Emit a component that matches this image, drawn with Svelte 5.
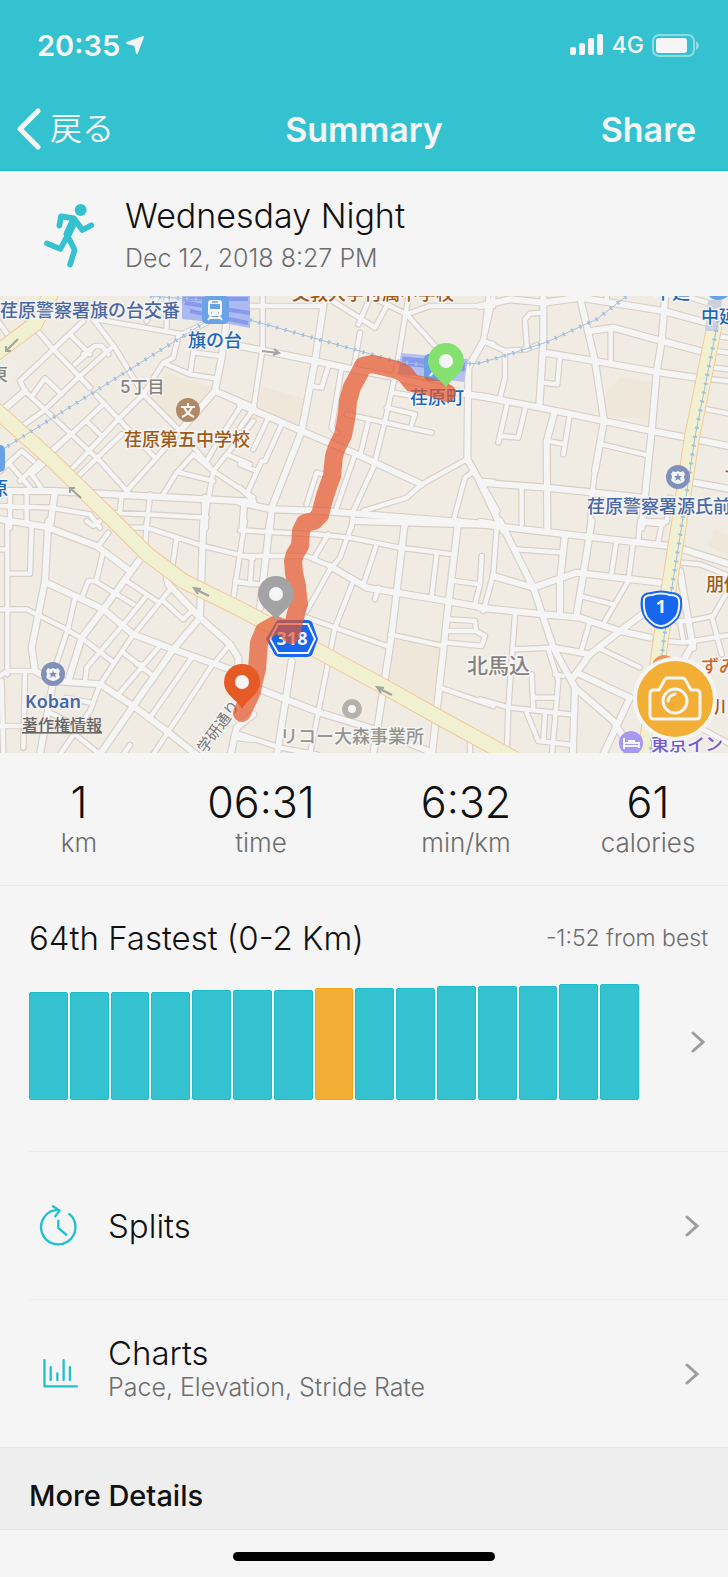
<script>
  const stats = [
    { value: '1', unit: 'km' },
    { value: '06:31', unit: 'time' },
    { value: '6:32', unit: 'min/km' },
    { value: '61', unit: 'calories' }
  ];

  const runs = [108, 108, 108, 108, 110, 110, 110, 112, 112, 112, 114, 114, 114, 116, 116];
  const currentRun = 7;

  // Street network, in map sectors drawn at three units to the pixel.
  const sectors = [
    {
      x: 0, y: 290,
      narrow: 'M-10 85L30 140M70 70L160 175L270 290M288 312L465 500M250 90L160 175L60 270L75 300L0 360M75 300L300 510L385 605M210 130L270 190M250 190L285 165L305 165L325 190M225 220L275 175M240 255L340 165M240 255L130 360L60 410M100 310L135 262L185 310M280 85L345 170L400 260L430 310L550 430L640 540L760 620M290 85L550 130M620 95L535 135L520 200L490 215L430 310L355 385L210 540M490 215L570 250L645 262M585 150L570 250M585 185L660 195M310 340L160 480M260 390L300 430M365 430L230 560M540 420L470 500L380 600M620 510L660 440L720 350M580 490L640 540L760 390M540 545L640 570M580 490L530 545L490 610M640 540L610 710M680 490L750 520M0 540L65 480L100 510M30 520L90 590M130 520L95 550L130 600M30 600L30 710M80 600L80 690M0 645L150 650L270 670L300 710M365 610L360 665M330 665L440 670L620 680M450 610L440 710M735 630L730 710M690 165L760 172M700 90L700 42L760 45M440 90L470 20M500 110L500 20M210 430L130 500L60 570',
      wide: 'M680 90L665 200L645 300L540 420M645 300L760 350M0 600L160 600L370 612L760 632M165 600L150 710M615 620L615 710M75 300L0 365'
    },
    {
      x: 240, y: 290,
      narrow: 'M0 45L250 45L260 20M270 25L405 110L440 45M355 100L390 20M400 20L500 70M500 70L570 45L760 45M500 70L590 170M505 20L470 230L435 390L400 530L340 660M68 0L68 170L40 355L0 410M360 125L340 235M265 225L245 290L215 285M305 230L275 410L290 425M320 370L575 425M440 350L525 370L515 400M460 305L520 315M85 380L40 475M125 400L75 510L65 510L20 610M0 520L50 540M345 490L290 650M385 390L360 495M760 20L730 150L760 160M0 590L40 630M200 640L230 545L250 550M640 690L675 560L695 545M720 570L760 572M340 660L335 710M495 680L495 710M10 640L5 710M370 660L500 620L545 580L680 505',
      wide: 'M0 165L225 210L340 235L470 260L680 310L760 322M250 45L225 210L185 420L95 650M0 340L185 420L350 490L545 580M730 150L685 230L682 505L770 660M0 635L95 655L250 660L750 700M95 650L90 710'
    },
    {
      x: 480, y: 290,
      narrow: 'M25 20L10 150L75 180L140 175L190 155M75 180L75 260L60 320M190 65L150 68L135 85L140 165M392 115L392 210M240 195L232 280L190 275M80 345L55 455M135 355L115 440L65 435M268 380L250 490M205 450L255 460M365 460L500 492M125 585L125 700M0 690L60 700M710 135L760 142M705 180L760 187M700 230L760 237M695 265L760 272M680 355L760 370M380 0L380 30M600 10L690 38M490 690L560 692L570 620M335 610L330 710M345 540L335 620',
      wide: 'M0 45L90 25L190 35L300 20L550 60L680 95M190 20L190 155L178 345M300 20L345 210L372 390L345 540M330 120L400 110L545 150L660 180M195 185L345 210L530 243L650 260M555 20L545 150L530 243L515 420L485 710M0 315L180 350L372 390L515 420L620 440L760 468M222 370L200 450L202 710M0 575L200 590L490 620M0 575L70 720M645 575L760 596'
    },
    {
      x: 0, y: 520,
      narrow: 'M22 0L22 460M95 10L90 158L22 158M0 85L22 85M0 265L80 265L190 320L250 355L335 420M325 35L295 75L310 90L290 175M245 230L265 180L285 180L400 250M380 180L470 240M225 230L205 320L165 440M435 230L370 310L260 440L255 480M515 200L410 330M400 340L300 490M490 240L550 295L580 265M475 380L360 515M370 395L460 465M575 410L450 590M635 435L460 700M690 370L640 430M440 0L435 100M380 20L440 20L610 75L760 112M530 50L515 150M735 0L700 230M705 180L760 190M0 465L20 450L105 450M5 480L10 700M75 460L70 680M0 615L70 615M300 490L270 570L180 700M200 530L270 545M200 620L300 700M150 575L200 600L205 630M370 700L390 672M260 0L280 15L300 0M700 650L760 657M410 430L430 430',
      wide: 'M0 -5L140 18L290 75L390 150M145 0L135 180L95 380L105 450L160 480L300 490L400 555L500 630L600 710M140 185L310 265L400 340L520 385L710 452M420 115L310 265L245 350L205 480M500 170L505 190L600 290L690 370L715 410L715 450M600 290L520 385L400 555L300 700M610 0L600 290M160 480L120 700M760 580L710 620L690 710'
    },
    {
      x: 240, y: 520,
      narrow: 'M0 28L230 40L330 50L480 80L640 100M0 105L200 105L270 135M265 40L220 115M340 0L300 110L270 145L200 270M35 120L30 190M0 185L60 190M340 180L285 320L210 700M410 70L370 190M415 200L405 235M590 100L575 225M645 180L720 190M725 105L720 190L705 250M450 340L610 375M200 290L440 375M630 295L705 300L708 330L735 345L725 375L620 365M630 330L700 330M0 640L120 680L230 700M600 500L760 555M690 660L690 710',
      wide: 'M350 0L760 12M90 0L60 260M270 135L380 200L620 240L760 265M495 0L455 340L400 700M655 0L625 250L575 710M60 505L240 575L420 630L570 692M155 420L110 710'
    },
    {
      x: 480, y: 520,
      narrow: 'M50 20L40 160L10 270M110 85L250 95M300 225L400 250M410 55L395 155M460 60L445 180L375 300M480 0L475 60M545 10L535 60M490 5L550 10M330 300L305 385M100 385L220 380M105 280L85 560L80 710M365 385L480 440M155 460L160 560M160 530L230 530M0 535L90 560L270 580M205 385L235 480L215 710M140 575L175 660L280 672M195 580L190 660M225 460L250 465M605 125L660 130L760 170M560 360L610 365L760 340M625 300L700 285L760 180M695 285L725 400M590 300L625 300M600 300L610 360M660 620L760 675',
      wide: 'M0 10L260 40L480 65L570 75M60 0L160 200L220 380L285 500L278 710M40 165L160 200L290 155L540 185M255 40L240 180L240 280M0 260L190 280L300 290L420 330L510 350M335 0L310 160L290 280M500 270L420 330L330 400L275 475M220 380L330 400M300 460L450 530M285 500L400 600L450 680M450 530L370 700M610 85L760 133M600 150L625 300L640 380M640 365L610 420'
    }
  ];

  const mainRoads =
    'M55 285L35 323L-5 353M-5 408L53 460L114 520L147 553L183 580L240 608L383 685L440 717L515 758M715 322L692 436L679 523L661 637L645 756';
  const railways = 'M0 450L215 315M150 295L215 300M250 319L395 360L430 365L480 362L507 354L547 341L597 318L628 294M718 320L695 436L682 523L664 637L650 756';
  const route =
    'M447 392L430 386L412 382L405 373L397 369L385 366L372 363L363 365L358 375L352 386L348 400L347 412L345 424L343 434L337 446L334 455L333 465L332 475L328 486L325 495L322 506L320 514L314 520L305 522L301 530L300 545L295 553L293 560L294 572L297 585L298 596L299 603L296 612L291 634L287 628L275 624L264 630L259 642L258 655L257 668L254 680L252 690L249 697L245 705L242 712';
</script>

{#snippet chevron()}
  <svg class="chevron" viewBox="0 0 14 22" aria-hidden="true"><path d="M2 2L12 11L2 20" /></svg>
{/snippet}

{#snippet pin(x, y, color)}
  <g transform="translate({x} {y})">
    <path d="M0 27C-4 18-18 13-18 0A18 18 0 0 1 18 0C18 13 4 18 0 27Z" fill={color} />
    <circle r="7" fill="#f5f5f5" />
  </g>
{/snippet}

{#snippet police(x, y)}
  <g transform="translate({x} {y})">
    <circle r="12" fill="#7f90ba" />
    <path d="M-5-6Q-3-4 0-6Q3-4 5-6L7-3Q5 0 7 3Q5 6 0 7Q-5 6-7 3Q-5 0-7-3Z" fill="#f5f5f5" />
    <path d="M0-4L1-1L4-1L2 1L3 4L0 2L-3 4L-2 1L-4-1L-1-1Z" fill="#7f90ba" />
  </g>
{/snippet}

<main>
  <header>
    <div class="status">
      <span class="clock">20:35</span>
      <svg class="arrow" viewBox="0 0 20 20" aria-hidden="true"><path d="M18 2L12 18L10 10L2 8Z" /></svg>
      <svg class="signal" viewBox="0 0 34 22" aria-hidden="true">
        <rect x="0" y="13" width="6" height="8" rx="2" /><rect x="9" y="9" width="6" height="12" rx="2" />
        <rect x="18" y="4" width="6" height="17" rx="2" /><rect x="27" y="0" width="6" height="21" rx="2" />
      </svg>
      <span class="network">4G</span>
      <svg class="battery" viewBox="0 0 48 23" aria-hidden="true">
        <rect x="1" y="1" width="41" height="21" rx="6" fill="none" stroke="#8edde4" stroke-width="2" />
        <rect x="4" y="4" width="31" height="15" rx="3" /><path d="M44 7Q50 11 44 16Z" fill="#8edde4" />
      </svg>
    </div>
    <nav>
      <button class="back">
        <svg viewBox="0 0 26 42" aria-hidden="true"><path d="M22 3L4 21L22 39" /></svg>
        <span>戻る</span>
      </button>
      <h1>Summary</h1>
      <button class="share">Share</button>
    </nav>
  </header>

  <section class="activity">
    <svg class="runner" viewBox="126 604 162 204" aria-hidden="true">
      <circle cx="242" cy="628" r="18" />
      <path d="M178 675L183 647L222 653L247 688L274 674M203 704L181 745L141 728M204 708L224 748L210 792" />
      <path class="torso" d="M221 662L203 701" />
    </svg>
    <div>
      <h2>Wednesday Night</h2>
      <p>Dec 12, 2018 8:27 PM</p>
    </div>
  </section>

  <section class="map" aria-label="Route map">
    <svg viewBox="0 295 728 457" preserveAspectRatio="xMidYMid slice">
      <path d="M165 372L215 387L203 405L180 430L147 393ZM262 385L304 398L298 425L252 415ZM604 395L620 376L652 381L648 418L606 415ZM390 636L440 645L432 710L382 684ZM714 528L728 534V553L708 545Z" fill="#efe7da" />
      {#each sectors as s}
        <g class="casing" transform="translate({s.x} {s.y}) scale(.333333)">
          <path d={s.narrow} stroke-width="20" /><path d={s.wide} stroke-width="25" />
        </g>
      {/each}
      {#each sectors as s}
        <g class="street" transform="translate({s.x} {s.y}) scale(.333333)">
          <path d={s.narrow} stroke-width="13" /><path d={s.wide} stroke-width="18" />
        </g>
      {/each}
      <path d={mainRoads} fill="none" stroke="#f3c898" stroke-width="16" />
      <path d={mainRoads} fill="none" stroke="#f1f1d1" stroke-width="14" />

      <path d="M182 295H250V327L230 323L182 318Z" fill="#adb9f1" />
      <path d="M185 302L250 312M190 310L248 322M183 298H248" stroke="#8699ed" stroke-width="4" />
      <path d="M401 352L468 358L464 381L398 373Z" fill="#b5c0ef" />
      <path d="M402 360L465 366" stroke="#8599ed" stroke-width="9" />
      <path d="M708 299H722L718 330H705Z" fill="#cbd1dc" />
      <path d={railways} class="rail" /><path d={railways} class="ties" />

      <g class="oneway">
        <path d="M18 338L6 350M6 345V350H11" /><path d="M81 497L70 487M70 492V487H75" />
        <path d="M262 350L278 352M274 348L279 352L273 354" /><path d="M209 595L195 588M198 593L194 587L201 588" />
        <path d="M392 694L378 687M381 692L377 686L384 687" />
      </g>

      <g transform="translate(215 309)">
        <rect x="-13" y="-14" width="27" height="28" rx="5" fill="#69a3e6" />
        <rect x="-7" y="-10" width="14" height="16" rx="3" fill="#f5f5f5" />
        <path d="M-5-6H5V-1H-5Z" fill="#69a3e6" /><path d="M-3-8H3M-4 3H-3M3 3H4" stroke="#69a3e6" stroke-width="1.500" />
        <path d="M-4 6L-7 10M4 6L7 10M-5 8H5" stroke="#f5f5f5" stroke-width="2" />
      </g>
      <rect x="424" y="353" width="27" height="27" rx="5" fill="#69a3e6" />
      <path d="M430 375L439 364" stroke="#f5f5f5" stroke-width="2" />
      <rect x="-20" y="444" width="25" height="27" rx="5" fill="#69a3e6" />
      <path d="M709 286H728V295Q724 299 718 299Q712 299 709 295Z" fill="#69a3e6" />

      <g transform="translate(188 409)"><circle r="12" fill="#b08a66" /><path d="M0-7V-3M-7-3H7M-4-3Q-1 4 6 7M4-3Q1 4-6 7" fill="none" stroke="#f5f5f5" stroke-width="2" /></g>
      {@render police(678, 476)}
      {@render police(53, 673)}
      <circle cx="352" cy="708" r="7" fill="#f5f5f5" stroke="#b5b2ab" stroke-width="6" />
      <circle cx="664" cy="666" r="12" fill="#ee955c" />
      <g transform="translate(631 742)"><circle r="12" fill="#a799f2" /><path d="M-7-5V6M-7 3H8M8 5V0H-7M-3-2H4" stroke="#f5f5f5" stroke-width="2" fill="none" /></g>

      <g class="labels">
        <text x="0" y="316" class="navy">荏原警察署旗の台交番</text>
        <text x="188" y="346" class="blue">旗の台</text>
        <text x="292" y="299" class="brown">文教大学付属中学校</text>
        <text x="-10" y="380" class="gray">東</text>
        <text x="120" y="392" class="gray small">5丁目</text>
        <text x="124" y="445" class="brown">荏原第五中学校</text>
        <text x="-10" y="494" class="blue">原</text>
        <text x="410" y="403" class="blue">荏原町</text>
        <text x="654" y="298" class="blue">中延</text>
        <text x="701" y="322" class="blue">中延</text>
        <text x="587" y="512" class="navy">荏原警察署源氏前</text>
        <text x="724" y="482" class="brown">す</text>
        <text x="706" y="590" class="brown">朋優</text>
        <text x="701" y="672" class="orange">ずみ</text>
        <text x="714" y="712" class="brown">川</text>
        <text x="467" y="672" class="gray place">北馬込</text>
        <text x="280" y="742" class="stone">リコー大森事業所</text>
        <text x="651" y="750" class="violet">東京イン</text>
        <text x="25" y="707" class="navy koban">Koban</text>
        <text transform="translate(205 753) rotate(-54)" class="road">学研通り</text>
      </g>
      <a href="#legal"><text x="22" y="730" class="legal">著作権情報</text></a>

      <path d="M266 638L276 621Q277 619 280 619H307Q310 619 312 621L318 638L312 654Q310 656 307 656H280Q277 656 275 654Z" fill="#1766ee" />
      <path d="M270 638L278 623H308L315 638L308 652H278Z" class="shield" />
      <text x="292" y="644" class="number">318</text>
      <path d="M641 597Q643 591 651 591Q661 588 671 591Q680 591 682 598Q683 610 678 618Q669 628 661 628Q653 628 645 618Q639 609 641 597Z" fill="#1766ee" />
      <path d="M644 598Q645 594 652 594Q661 591 670 594Q678 594 679 599Q680 609 676 616Q668 625 661 625Q654 625 647 616Q643 609 644 598Z" class="shield" />
      <text x="661" y="612" class="number">1</text>

      <path d={route} class="route" />
      {@render pin(276, 593, '#a3a3a3')}
      {@render pin(446, 360, '#84e170')}
      {@render pin(242, 681, '#e65a25')}
    </svg>
    <button class="camera" aria-label="Add photo">
      <svg viewBox="0 0 54 46" aria-hidden="true">
        <path d="M6 14H11L16 5Q17 2 20 2H34Q37 2 38 5L43 14H48Q52 14 52 18V39Q52 43 48 43H6Q2 43 2 39V18Q2 14 6 14Z" />
        <circle cx="27" cy="25" r="12" /><path d="M20 25Q21 19 27 18" />
      </svg>
    </button>
  </section>

  <dl class="stats">
    {#each stats as stat}
      <div><dd>{stat.value}</dd><dt>{stat.unit}</dt></div>
    {/each}
  </dl>

  <section class="ranking">
    <div class="heading"><h3>64th Fastest (0-2 Km)</h3><p>-1:52 from best</p></div>
    <a class="history" href="#history" aria-label="Run history">
      <div class="bars">
        {#each runs as height, i}
          <span class:current={i === currentRun} style="height: {height}px"></span>
        {/each}
      </div>
      {@render chevron()}
    </a>
  </section>

  <a class="row" href="#splits">
    <svg class="icon" viewBox="117 192 120 130" aria-hidden="true"><path d="M175 210A52 52 0 1 0 208 222M159 199L179 212L166 229M175 242V265L199 285" stroke-width="7" /></svg>
    <div><h3>Splits</h3></div>
    {@render chevron()}
  </a>
  <a class="row detailed" href="#charts">
    <svg class="icon" viewBox="117 633 120 130" aria-hidden="true"><path d="M133 658V737H231M152 679V718M172 698V718M191 658V718M210 679V718" stroke-width="7" /></svg>
    <div><h3>Charts</h3><p>Pace, Elevation, Stride Rate</p></div>
    {@render chevron()}
  </a>

  <h2 class="more">More Details</h2>
  <footer><span></span></footer>
</main>

<style>
  :global(body) { margin: 0; background: #f5f5f5; }
  main { font-family: Inter, "Noto Sans CJK JP", sans-serif; color: #111; font-weight: 300; background: #f5f5f5; }
  h1, h2, h3, p, dl, dd, dt { margin: 0; font-weight: inherit; }
  button { border: 0; padding: 0; background: none; font: inherit; color: inherit; cursor: pointer; }
  a { color: inherit; text-decoration: none; }
  svg { display: block; flex: none; }

  header { background: #35c2d0; color: #f5f5f5; border-bottom: 1px solid #12bccd; }
  .status { display: flex; align-items: center; height: 90px; padding: 0 28px 0 37px; fill: #f5f5f5; }
  .clock { font-size: 29px; font-weight: 600; }
  .arrow { width: 20px; height: 20px; margin-left: 5px; stroke: #f5f5f5; stroke-width: 2px; stroke-linejoin: round; }
  .signal { width: 34px; height: 22px; margin-left: auto; }
  .network { font-size: 23px; font-weight: 500; margin: 0 8px; }
  .battery { width: 48px; height: 23px; }
  nav { display: grid; grid-template-columns: 1fr auto 1fr; align-items: center; height: 78px; padding: 0 32px 2px; }
  .back { display: flex; align-items: center; gap: 8px; justify-self: start; margin-left: -16px; font-size: 32px; line-height: 42px; }
  .back svg { width: 26px; height: 42px; fill: none; stroke: #f5f5f5; stroke-width: 5px; stroke-linecap: round; stroke-linejoin: round; }
  .back span { font-weight: 350; }
  h1, .share { font-size: 34px; font-weight: 600; }
  .share { justify-self: end; }

  .activity { display: flex; align-items: center; gap: 29px; height: 124px; padding: 1px 42px 0; }
  .runner { width: 54px; height: 68px; padding-top: 4px; fill: #35c2d0; }
  .runner path { fill: none; stroke: #35c2d0; stroke-width: 17px; stroke-linecap: round; stroke-linejoin: round; }
  .runner .torso { stroke-width: 25px; }
  .activity h2, h3 { font-size: 34px; line-height: 44px; }
  p { font-size: 25px; line-height: 32px; color: #6d6d6d; }
  .activity p { padding-top: 4px; }

  .map { position: relative; height: 457px; background: #f0ece4; overflow: hidden; }
  .map > svg { width: 100%; height: 100%; }
  .casing, .street { fill: none; stroke-linecap: round; stroke-linejoin: round; }
  .casing { stroke: #d8cfc7; }
  .street { stroke: #f5f5f5; }
  .rail { fill: none; stroke: #a6bfdc; stroke-width: 1px; }
  .ties { fill: none; stroke: #a6bfdc; stroke-width: 4px; stroke-dasharray: 2 7; }
  .oneway { fill: none; stroke: #a3a3a0; stroke-width: 2px; }
  .labels { font-size: 18px; font-weight: 500; stroke: #f5f5f5; stroke-width: 3px; stroke-linejoin: round; paint-order: stroke; }
  .navy { fill: #4a67a5; }
  .blue { fill: #1c68b8; }
  .brown { fill: #a05a18; }
  .gray { fill: #85827e; }
  .stone { fill: #96938c; }
  .orange { fill: #d5641c; }
  .violet { fill: #7259d0; }
  .small { font-size: 17px; }
  .place { font-size: 21px; }
  .koban { font-family: "Noto Sans", sans-serif; font-weight: 600; }
  .road { font-size: 15px; font-weight: 400; fill: #777; }
  .legal { font-size: 16px; fill: #666; font-weight: 500; text-decoration: underline; }
  .shield { fill: #1766ee; stroke: #f5f5f5; stroke-width: 2px; }
  .number { font: 700 18px "Noto Sans", sans-serif; fill: #f5f5f5; text-anchor: middle; }
  .route { fill: none; stroke: #e5562b; stroke-opacity: .7; stroke-width: 18px; stroke-linecap: round; stroke-linejoin: round; }
  .camera { position: absolute; right: 11px; bottom: 12px; display: grid; place-items: center; width: 84px; height: 84px; border: 4px solid #f5f5f5; border-radius: 50%; background: #f3ae35; }
  .camera svg { width: 54px; height: 46px; fill: none; stroke: #f5f5f5; stroke-width: 3px; stroke-linecap: round; }

  .stats { display: grid; grid-template-columns: 79fr 103fr 102fr 80fr; text-align: center; padding: 24px 0 28px; border-bottom: 1px solid #ececec; }
  dd { font-size: 43px; line-height: 50px; }
  dt { font-size: 26px; line-height: 32px; margin-bottom: -2px; color: #6d6d6d; }

  .ranking { padding: 30px 20px 51px 29px; }
  .heading { display: flex; align-items: center; justify-content: space-between; }
  .heading p { font-size: 23px; }
  h3 { font-size: 33px; }
  .history { display: flex; align-items: center; justify-content: space-between; margin-top: 24px; padding-right: 3px; }
  .bars { display: flex; align-items: flex-end; gap: 2px; flex: 1; margin-right: 52px; }
  .bars span { flex: 1; background: #35c2d0; border: 1px solid #1bbdcc; border-radius: 2px; box-sizing: border-box; }
  .bars .current { background: #f3ae35; border-color: #f3a51c; }
  .chevron { width: 14px; height: 22px; fill: none; stroke: #9d9d9d; stroke-width: 3px; stroke-linecap: round; }

  .row { display: flex; align-items: center; height: 147px; margin-left: 29px; padding: 0 29px 0 10px; gap: 29px; border-top: 1px solid #ececec; }
  .row div { flex: 1; }
  .icon { width: 40px; height: 43px; fill: none; stroke: #22c0ce; stroke-linecap: round; stroke-linejoin: round; }
  .row p { line-height: 24px; }
  .detailed div { padding-bottom: 18px; }
  .more { background: #eee; border-top: 1px solid #e8e8e8; border-bottom: 1px solid #e8e8e8; padding: 30px 29px 15px; font-size: 29px; line-height: 36px; font-weight: 500; }
  footer { display: flex; justify-content: center; padding: 22px 0 16px; }
  footer span { width: 36%; height: 9px; border-radius: 5px; background: #000; }
</style>
